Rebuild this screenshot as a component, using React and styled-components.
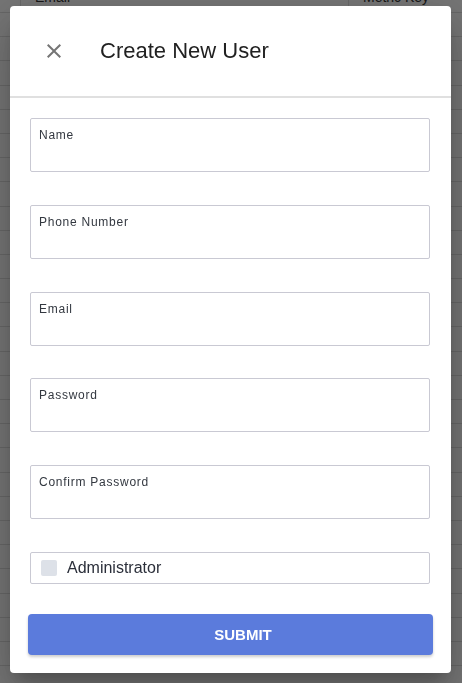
import React from "react";
import styled, { createGlobalStyle } from "styled-components";

const GlobalStyle = createGlobalStyle`
  html, body {
    margin: 0;
    padding: 0;
    background: #fff;
    font-family: "Liberation Sans", Arial, sans-serif;
    overflow: hidden;
  }
`;

const Page = styled.div`
  width: 462px;
  height: 683px;
  overflow: hidden;
`;

const Table = styled.div`
  margin-top: -18px;
  width: 100%;
`;

const HeadRow = styled.div`
  display: grid;
  grid-template-columns: 20px 328px 1fr;
  height: 30px;
  border-bottom: 1px solid #e0e0e0;
`;

const HeadCell = styled.div`
  display: flex;
  align-items: center;
  padding-left: 14px;
  font-size: 14px;
  color: #333;
  border-left: ${(p) => (p.$edge ? "1px solid #e0e0e0" : "none")};
`;

const Row = styled.div`
  height: 23.2px;
  border-bottom: 1px solid #e0e0e0;
`;

const Backdrop = styled.div`
  position: fixed;
  inset: 0;
  background: rgba(0, 0, 0, 0.54);
  display: flex;
  justify-content: center;
  align-items: flex-start;
  padding-top: 6px;
`;

const Dialog = styled.div`
  width: 441px;
  background: #fff;
  border-radius: 4px;
  box-shadow: 0 11px 15px -7px rgba(0, 0, 0, 0.2),
    0 24px 38px 3px rgba(0, 0, 0, 0.14), 0 9px 46px 8px rgba(0, 0, 0, 0.12);
  margin-left: -1px;
`;

const Header = styled.div`
  height: 90px;
  display: flex;
  align-items: center;
  padding-left: 32px;
  border-bottom: 2px solid #e0e0e0;
`;

const CloseButton = styled.button`
  width: 24px;
  height: 24px;
  padding: 0;
  border: none;
  background: none;
  color: #757575;
  display: flex;
  align-items: center;
  justify-content: center;
  cursor: pointer;
  margin-right: 34px;
`;

const Title = styled.h2`
  margin: 0;
  font-size: 22px;
  font-weight: 400;
  color: #212121;
`;

const Form = styled.form`
  display: flex;
  flex-direction: column;
  padding: 20px 21px 18px 20px;
`;

const Field = styled.label`
  display: flex;
  flex-direction: column;
  height: 54px;
  box-sizing: border-box;
  border: 1px solid #c9c9d3;
  border-radius: 2px;
  padding: 9px 8px 0;
  margin-bottom: 32.75px;
`;

const FieldLabel = styled.span`
  font-size: 12px;
  letter-spacing: 0.75px;
  color: #333840;
`;

const Input = styled.input`
  border: none;
  outline: none;
  background: transparent;
  font: inherit;
  font-size: 15px;
  padding: 2px 0 0;
`;

const CheckRow = styled.label`
  display: flex;
  align-items: center;
  gap: 10px;
  height: 32px;
  box-sizing: border-box;
  border: 1px solid #c9c9d3;
  border-radius: 2px;
  padding: 0 10px;
  margin-bottom: 30px;
  font-size: 16px;
  color: #2b2f3a;
  cursor: pointer;
`;

const CheckBox = styled.span`
  width: 16px;
  height: 16px;
  border-radius: 2px;
  background: #dde1e8;
`;

const Submit = styled.button`
  height: 41px;
  margin: 0 -3px 0 -2px;
  padding: 0 0 0 25px;
  border: none;
  border-radius: 4px;
  background: #5b7bdc;
  color: #fff;
  font-family: inherit;
  font-size: 15px;
  font-weight: 700;
  box-shadow: 0 2px 3px rgba(0, 0, 0, 0.2);
  cursor: pointer;
`;

const fields = ["Name", "Phone Number", "Email", "Password", "Confirm Password"];

export default function App() {
  return (
    <Page>
      <GlobalStyle />
      <Table>
        <HeadRow>
          <HeadCell />
          <HeadCell $edge>Email</HeadCell>
          <HeadCell $edge>Metric Key</HeadCell>
        </HeadRow>
        {Array.from({ length: 28 }).map((_, i) => (
          <Row key={i} />
        ))}
      </Table>

      <Backdrop>
        <Dialog>
          <Header>
            <CloseButton aria-label="close">
              <svg width="24" height="24" viewBox="0 0 24 24" fill="currentColor">
                <path d="M19 6.41 17.59 5 12 10.59 6.41 5 5 6.41 10.59 12 5 17.59 6.41 19 12 13.41 17.59 19 19 17.59 13.41 12z" />
              </svg>
            </CloseButton>
            <Title>Create New User</Title>
          </Header>
          <Form onSubmit={(e) => e.preventDefault()}>
            {fields.map((f) => (
              <Field key={f}>
                <FieldLabel>{f}</FieldLabel>
                <Input type={f.includes("Password") ? "password" : "text"} />
              </Field>
            ))}
            <CheckRow>
              <CheckBox />
              Administrator
            </CheckRow>
            <Submit type="submit">SUBMIT</Submit>
          </Form>
        </Dialog>
      </Backdrop>
    </Page>
  );
}
